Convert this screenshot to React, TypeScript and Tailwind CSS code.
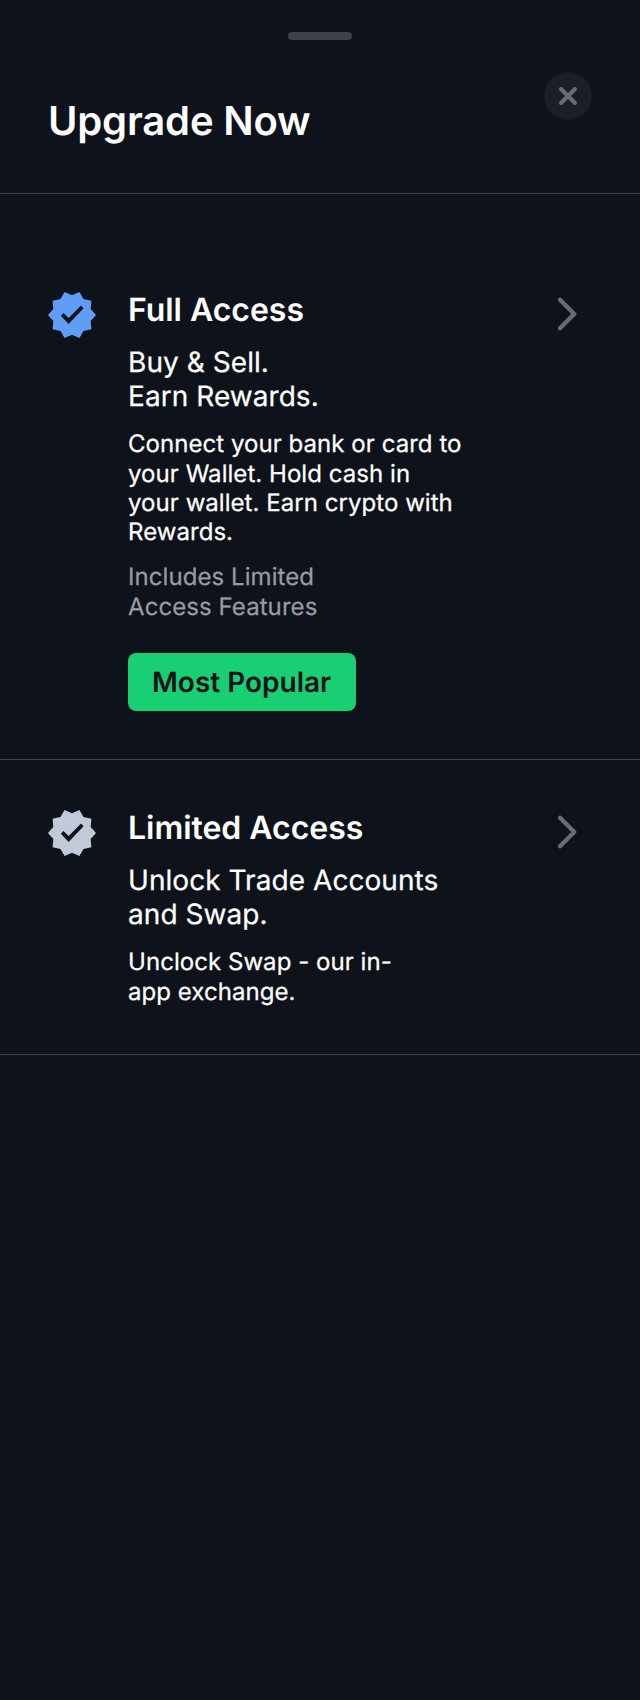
import type { ReactNode } from "react";

function VerifiedIcon({ className }: { className: string }) {
  return (
    <svg viewBox="1 1 22 22" className={`mt-px size-12 shrink-0 ${className}`} aria-hidden="true">
      <path
        fill="currentColor"
        fillRule="evenodd"
        d="m23 12-2.44-2.79.34-3.69-3.61-.82-1.89-3.2L12 2.96 8.6 1.5 6.71 4.69 3.1 5.5l.34 3.7L1 12l2.44 2.79-.34 3.7 3.61.82L8.6 22.5l3.4-1.47 3.4 1.46 1.89-3.19 3.61-.82-.34-3.69L23 12ZM10.45 16.1 6.9 12.4l1.2-1.35 2.35 2.35 5.7-5.7 1.15 1.25Z"
      />
    </svg>
  );
}

function ChevronIcon() {
  return (
    <svg viewBox="0 0 20 36" className="h-9 w-5 shrink-0 text-[#676b73]" fill="none" aria-hidden="true">
      <path d="M2 3.8 16.2 18 2 32.2" stroke="currentColor" strokeWidth="4.4" strokeLinecap="round" strokeLinejoin="round" />
    </svg>
  );
}

type TierProps = {
  title: string;
  tone: string;
  spacing: string;
  heading: string[];
  body: string[];
  children?: ReactNode;
};

function Lines({ lines }: { lines: string[] }) {
  return (
    <>
      {lines.map((line) => (
        <span key={line} className="block whitespace-nowrap [-webkit-text-stroke:0.25px_currentColor]">
          {line}
        </span>
      ))}
    </>
  );
}

function Tier({ title, tone, spacing, heading, body, children }: TierProps) {
  return (
    <section className={`flex items-start border-b border-[#3f424a] pr-[62px] pl-12 ${spacing}`}>
      <VerifiedIcon className={tone} />
      <div className="ml-8 min-w-0 flex-1">
        <h2 className="text-[32px] leading-[39px] font-semibold tracking-[-0.001em]">{title}</h2>
        <p className="mt-4 text-[28px] leading-[34px] tracking-[0.002em]">
          <Lines lines={heading} />
        </p>
        <p className="mt-[16.4px] text-[24px] leading-[29.33px] tracking-[0.002em]">
          <Lines lines={body} />
        </p>
        {children}
      </div>
      <div className="mt-1.5">
        <ChevronIcon />
      </div>
    </section>
  );
}

export default function App() {
  return (
    <main className="flex h-[1700px] w-[640px] flex-col bg-[#0e121a] font-[Inter,sans-serif] text-white [text-rendering:geometricPrecision]">
      <header className="flex h-[194px] flex-col border-b border-[#3f424a]">
        <div className="mt-8 h-2 w-16 self-center rounded-full bg-[#3e4149]" />
        <div className="mt-8 flex items-start justify-between px-12">
          <h1 className="mt-[25px] text-[40px] leading-[48px] font-semibold tracking-[-0.004em]">Upgrade Now</h1>
          <button
            type="button"
            aria-label="Close"
            className="flex size-12 items-center justify-center rounded-full bg-[#1b1e27] text-[#676b73]"
          >
            <svg viewBox="0 0 18 18" className="size-[18px]" fill="none" aria-hidden="true">
              <path d="m2 2 14 14M16 2 2 16" stroke="currentColor" strokeWidth="4" strokeLinecap="round" />
            </svg>
          </button>
        </div>
      </header>
      <Tier
        title="Full Access"
        tone="text-[#5f9df7]"
        spacing="h-[566px] pt-24"
        heading={["Buy & Sell.", "Earn Rewards."]}
        body={["Connect your bank or card to", "your Wallet. Hold cash in", "your wallet. Earn crypto with", "Rewards."]}
      >
        <p className="mt-[15.3px] text-[24px] leading-[30px] tracking-[0.003em] text-[#989ba2]">
          <Lines lines={["Includes Limited", "Access Features"]} />
        </p>
        <div className="mt-[31px] flex h-[58px] w-[228px] items-center rounded-lg bg-[#19cf74] px-6 text-[28px] leading-[34px] font-semibold whitespace-nowrap text-[#0e121a]">
          Most Popular
        </div>
      </Tier>
      <Tier
        title="Limited Access"
        tone="text-[#c2c9d9]"
        spacing="h-[295px] pt-12"
        heading={["Unlock Trade Accounts", "and Swap."]}
        body={["Unclock Swap - our in-", "app exchange."]}
      />
    </main>
  );
}
